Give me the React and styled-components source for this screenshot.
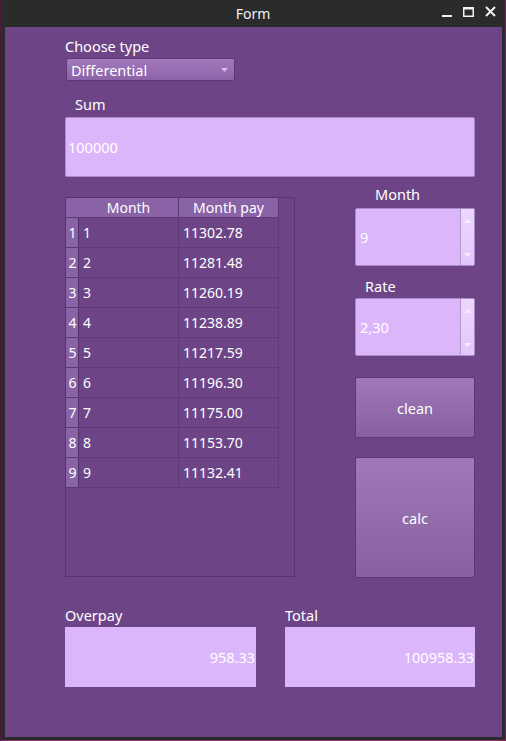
import React from 'react'
import styled, { createGlobalStyle } from 'styled-components'

const GlobalStyle = createGlobalStyle`
    html, body {
        margin: 0;
        padding: 0;
        background: #2b2b2b;
    }
    body {
        font-family: "Noto Sans", "DejaVu Sans", sans-serif;
        font-size: 14.5px;
        color: #fff;
    }
`

const Window = styled.div`
    width: 506px;
    height: 741px;
    box-sizing: border-box;
    display: flex;
    flex-direction: column;
    background: #2b2b2b;
    border-left: 1px solid #4a1a3a;
    border-right: 1px solid #7a2060;
    border-bottom: 1px solid #8c2a6a;
`

const TitleBar = styled.div`
    height: 27px;
    flex: none;
    position: relative;
    display: flex;
    align-items: center;
    justify-content: center;
    font-size: 14px;
    color: #f2f2f2;
`

const Controls = styled.div`
    position: absolute;
    right: 9px;
    top: 6px;
    display: flex;
    gap: 11px;
    align-items: center;
`

const Body = styled.div`
    flex: 1;
    margin: 0 3px 3px 4px;
    background: #6d4587;
    padding: 11px 0 0 60px;
    display: flex;
    flex-direction: column;
`

const Label = styled.div`
    height: 17px;
    line-height: 17px;
    padding-left: ${p => p.indent || 0}px;
    margin-bottom: ${p => p.gap || 3}px;
    white-space: nowrap;
`

const Combo = styled.div`
    width: 169px;
    height: 23px;
    margin-left: 1px;
    box-sizing: border-box;
    border: 1px solid #5c3a74;
    border-radius: 2px;
    background: linear-gradient(#a079bb, #8c63a7);
    display: flex;
    align-items: center;
    justify-content: space-between;
    padding: 0 6px 0 4px;
`

const Input = styled.div`
    width: ${p => p.width}px;
    height: 60px;
    box-sizing: border-box;
    background: #dcb6fb;
    border: 1px solid ${p => (p.flat ? '#dcb6fb' : '#a98bc6')};
    border-radius: ${p => (p.flat ? 0 : 2)}px;
    display: flex;
    align-items: center;
    justify-content: ${p => (p.right ? 'flex-end' : 'flex-start')};
    padding: 0 ${p => (p.right ? 0 : 2)}px;
    color: #fff;
`

const Section = styled.div`
    margin-top: ${p => p.top}px;
    display: flex;
    gap: ${p => p.gap}px;
`

const TableFrame = styled.div`
    margin-top: 11px;
    width: 230px;
    height: 380px;
    box-sizing: border-box;
    border: 1px solid #55356b;
`

const Grid = styled.table`
    border-collapse: collapse;
    border-spacing: 0;
    font-size: 14px;
`

const HeadCell = styled.th`
    height: 19px;
    padding: 0;
    font-weight: normal;
    text-align: center;
    background: #8a62a6;
    border-bottom: 1px solid #5d3c75;
    border-right: 1px solid ${p => (p.corner ? '#8a62a6' : '#5d3c75')};
    width: ${p => p.width}px;
`

const RowHead = styled.td`
    width: 11px;
    height: 29px;
    padding: 0 0 0 1px;
    text-align: center;
    background: #8a62a6;
    border-right: 1px solid #4f3066;
    border-bottom: 1px solid #5d3c75;
`

const Cell = styled.td`
    height: 29px;
    padding: 0 0 0 4px;
    border-right: 1px solid #5d3c75;
    border-bottom: 1px solid #5d3c75;
`

const Side = styled.div`
    width: 120px;
    display: flex;
    flex-direction: column;
`

const Spin = styled.div`
    height: 58px;
    box-sizing: border-box;
    background: #dcb6fb;
    border: 1px solid #a98bc6;
    border-radius: 2px;
    display: flex;
    margin-bottom: ${p => p.after}px;
`

const SpinText = styled.div`
    flex: 1;
    display: flex;
    align-items: center;
    padding-left: 4px;
`

const SpinButtons = styled.div`
    width: 13px;
    border-left: 1px solid #b397cf;
    background: linear-gradient(#ecd7ff, #e2c7fb);
    display: flex;
    flex-direction: column;
    justify-content: space-between;
    align-items: center;
    padding: 10px 0 8px;
`

const Button = styled.div`
    height: ${p => p.height}px;
    box-sizing: border-box;
    border: 1px solid #5a3a72;
    border-radius: 2px;
    background: linear-gradient(#a179ba, #86609f);
    display: flex;
    align-items: center;
    justify-content: center;
    margin-bottom: ${p => p.after || 0}px;
`

const Field = styled.div`
    display: flex;
    flex-direction: column;
`

const rows = [
    ['1', '11302.78'],
    ['2', '11281.48'],
    ['3', '11260.19'],
    ['4', '11238.89'],
    ['5', '11217.59'],
    ['6', '11196.30'],
    ['7', '11175.00'],
    ['8', '11153.70'],
    ['9', '11132.41'],
]

const Arrow = ({ up }) => (
    <svg width="7" height="4" viewBox="0 0 7 4">
        <polygon points={up ? '0,4 7,4 3.5,0' : '0,0 7,0 3.5,4'} fill="#f6ecff" />
    </svg>
)

const App = () => {
    return (
        <Window>
            <GlobalStyle />
            <TitleBar>
                Form
                <Controls>
                    <svg width="10" height="10" viewBox="0 0 10 10">
                        <rect x="0" y="8" width="10" height="2" fill="#f2f2f2" />
                    </svg>
                    <svg width="11" height="10" viewBox="0 0 11 10">
                        <rect x="0.75" y="0.75" width="9.5" height="8.5" fill="none" stroke="#f2f2f2" strokeWidth="1.5" />
                        <rect x="0" y="0" width="11" height="2.5" fill="#f2f2f2" />
                    </svg>
                    <svg width="11" height="11" viewBox="0 0 11 11">
                        <path d="M1 1 L10 10 M10 1 L1 10" stroke="#f2f2f2" strokeWidth="2" />
                    </svg>
                </Controls>
            </TitleBar>
            <Body>
                <Label>Choose type</Label>
                <Combo>
                    Differential
                    <svg width="7" height="4" viewBox="0 0 7 4">
                        <polygon points="0,0 7,0 3.5,4" fill="#d7c2e6" />
                    </svg>
                </Combo>
                <Section top={15} gap={0}>
                    <Field>
                        <Label indent={10} gap={4}>Sum</Label>
                        <Input width={410}>100000</Input>
                    </Field>
                </Section>
                <Section top={9} gap={60}>
                    <TableFrame>
                        <Grid>
                            <thead>
                                <tr>
                                    <HeadCell corner width={12} />
                                    <HeadCell width={99}>Month</HeadCell>
                                    <HeadCell width={99}>Month pay</HeadCell>
                                </tr>
                            </thead>
                            <tbody>
                                {rows.map(([m, pay]) => (
                                    <tr key={m}>
                                        <RowHead>{m}</RowHead>
                                        <Cell>{m}</Cell>
                                        <Cell>{pay}</Cell>
                                    </tr>
                                ))}
                            </tbody>
                        </Grid>
                    </TableFrame>
                    <Side>
                        <Label indent={20} gap={5}>Month</Label>
                        <Spin after={12}>
                            <SpinText>9</SpinText>
                            <SpinButtons><Arrow up /><Arrow /></SpinButtons>
                        </Spin>
                        <Label indent={10} gap={3}>Rate</Label>
                        <Spin after={21}>
                            <SpinText>2,30</SpinText>
                            <SpinButtons><Arrow up /><Arrow /></SpinButtons>
                        </Spin>
                        <Button height={61} after={19}>clean</Button>
                        <Button height={121}>calc</Button>
                    </Side>
                </Section>
                <Section top={29} gap={29}>
                    <Field>
                        <Label gap={3}>Overpay</Label>
                        <Input flat right width={191}>958.33</Input>
                    </Field>
                    <Field>
                        <Label gap={3}>Total</Label>
                        <Input flat right width={190}>100958.33</Input>
                    </Field>
                </Section>
            </Body>
        </Window>
    )
}

export default App
